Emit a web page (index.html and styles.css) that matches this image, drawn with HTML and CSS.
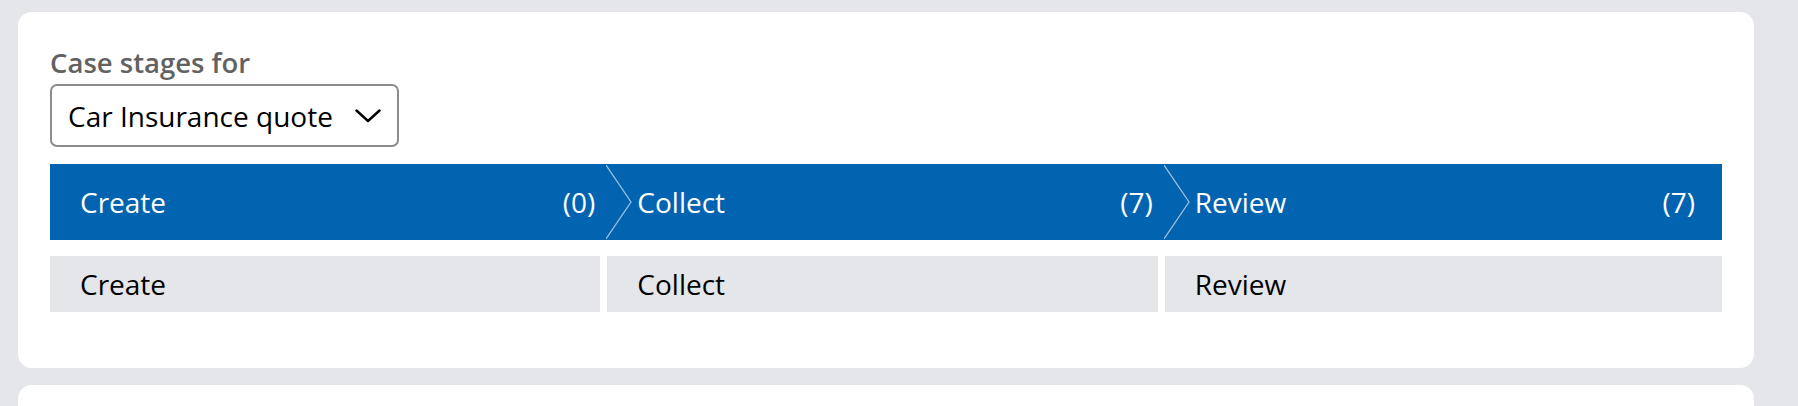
FILE: index.html
```html
<!DOCTYPE html>
<html lang="en">
<head>
<meta charset="utf-8">
<title>Case stages</title>
<link rel="stylesheet" href="styles.css">
</head>
<body>
<main class="page">
  <section class="card">
    <div class="field">
      <label class="field-label" for="case-type">Case stages for</label>
      <div class="select" id="case-type">
        <span class="select-value">Car Insurance quote</span>
        <svg class="select-icon" width="26" height="14" viewBox="0 0 26 14" aria-hidden="true">
          <polyline points="1.5,1.5 13,12 24.5,1.5" fill="none" stroke="#000" stroke-width="2.4" stroke-linecap="round" stroke-linejoin="round"/>
        </svg>
      </div>
    </div>
    <div class="stages">
      <div class="stage-head">
        <span class="stage-name">Create</span>
        <span class="stage-count">(0)</span>
      </div>
      <div class="stage-head has-arrow">
        <svg class="arrow" width="27" height="76" viewBox="0 0 27 76" aria-hidden="true" preserveAspectRatio="none">
          <polyline points="0,1 25,38 0,75" fill="none" stroke="rgba(255,255,255,0.6)" stroke-width="1.3"/>
        </svg>
        <span class="stage-name">Collect</span>
        <span class="stage-count">(7)</span>
      </div>
      <div class="stage-head has-arrow last">
        <svg class="arrow" width="27" height="76" viewBox="0 0 27 76" aria-hidden="true" preserveAspectRatio="none">
          <polyline points="0,1 25,38 0,75" fill="none" stroke="rgba(255,255,255,0.6)" stroke-width="1.3"/>
        </svg>
        <span class="stage-name">Review</span>
        <span class="stage-count">(7)</span>
      </div>
    </div>
    <div class="steps">
      <div class="step">Create</div>
      <div class="step">Collect</div>
      <div class="step last">Review</div>
    </div>
  </section>
  <section class="card card-next"></section>
</main>
</body>
</html>
```

FILE: styles.css
```css
* {
  box-sizing: border-box;
}

html, body {
  margin: 0;
  padding: 0;
}

body {
  background: #e4e6ea;
  font-family: "Open Sans", "Noto Sans", "Liberation Sans", sans-serif;
  color: #000;
  overflow: hidden;
}

.page {
  display: flex;
  flex-direction: column;
  gap: 17px;
  padding: 12px 44px 0 18px;
}

.card {
  background: #fff;
  border-radius: 14px;
  padding: 32px 32px 56px;
}

.card-next {
  height: 120px;
}

.field {
  display: flex;
  flex-direction: column;
  align-items: flex-start;
  gap: 2px;
}

.field-label {
  font-size: 27.5px;
  line-height: 38px;
  font-weight: 600;
  color: #626262;
}

.select {
  display: inline-flex;
  align-items: center;
  height: 63px;
  width: 349px;
  padding: 0 16px 0 16px;
  border: 2px solid #8c8c8c;
  border-radius: 7px;
  justify-content: space-between;
}

.select-value {
  font-size: 28px;
  line-height: 38px;
  color: #000;
}

.select-icon {
  flex: none;
  display: block;
}

.stages {
  margin-top: 17px;
  display: grid;
  grid-template-columns: repeat(3, 1fr);
  background: #0263b1;
  height: 76px;
}

.stage-head {
  position: relative;
  display: flex;
  align-items: center;
  justify-content: space-between;
  padding: 0 12px 0 30px;
  color: #fff;
  font-size: 28px;
  line-height: 38px;
}

.stage-head.last {
  padding-right: 27px;
}

.arrow {
  position: absolute;
  left: -1px;
  top: 0;
  height: 76px;
}

.steps {
  margin-top: 16px;
  display: grid;
  grid-template-columns: repeat(3, 1fr);
}

.step {
  background: #e4e6ea;
  height: 56px;
  display: flex;
  align-items: center;
  padding-left: 30px;
  margin-right: 7px;
  font-size: 28px;
  line-height: 38px;
  color: #000;
}

.step.last {
  margin-right: 0;
}
```
